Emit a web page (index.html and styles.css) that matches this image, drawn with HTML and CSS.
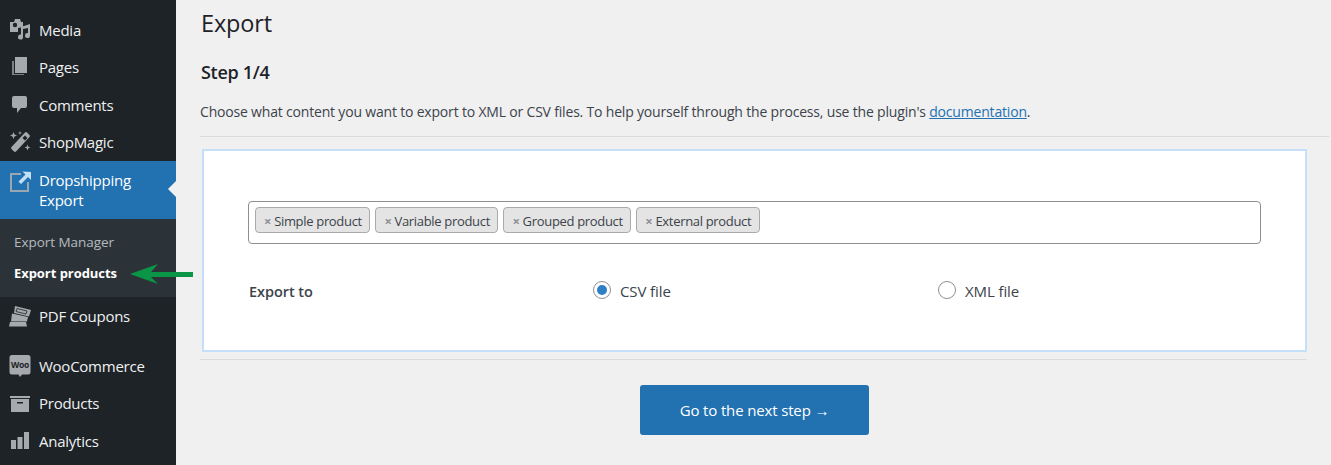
FILE: index.html
```html
<!DOCTYPE html>
<html lang="en">
<head>
<meta charset="utf-8">
<title>Export</title>
<link rel="stylesheet" href="styles.css">
</head>
<body>
<div class="app">
  <nav class="sidebar">
    <a class="item"><svg class="icon" viewBox="0 0 22 22"><path d="M1 3h4l1-3h5l1 3h2v5l-5 1v4H1z"/><circle cx="6" cy="6" r="2.200" fill="#1d2327"/><path d="M21 5v11.500a2.500 2.500 0 1 1-2-2.400V9l-5 1v8a2.500 2.500 0 1 1-2-2.400V8z"/></svg><span>Media</span></a>
    <a class="item"><svg class="icon" viewBox="0 0 22 22"><path d="M6 1h12v16H6z"/><path d="M3 5h2v13h10v1H3z" opacity=".7"/></svg><span>Pages</span></a>
    <a class="item"><svg class="icon" viewBox="0 0 22 22"><path d="M5 2h11a2 2 0 0 1 2 2v8a2 2 0 0 1-2 2h-4l-4 5v-5H5a2 2 0 0 1-2-2V4a2 2 0 0 1 2-2z"/></svg><span>Comments</span></a>
    <a class="item"><svg class="icon" viewBox="0 0 22 22"><path d="M16 1.500a1.500 1.500 0 0 1 2 0l2.500 2.500a1.500 1.500 0 0 1 0 2L7 20.500a1.500 1.500 0 0 1-2 0L2.500 18a1.500 1.500 0 0 1 0-2zM13.500 7l2.500 2.500 2.500-2.500L16 4.500z" fill-rule="evenodd"/><path d="M4.500 1l1 2.500 2.500 1-2.500 1-1 2.500-1-2.500-2.500-1 2.500-1zM18.500 13.500l.8 2.200 2.200.8-2.200.8-.8 2.200-.8-2.200-2.200-.8 2.200-.8zM11 0l.5 1.500L13 2l-1.500.5L11 4l-.5-1.500L9 2l1.500-.5z"/></svg><span>ShopMagic</span></a>
    <div class="group">
      <a class="item current"><svg class="icon ext" viewBox="0 0 22 22"><path d="M1 2h11v2H3v15h15v-8h2v10H1z" fill="#9aa7b0"/><path d="M22 1v8l-3-3-7 7-2.500-2.500 7-7-3-3z" fill="#bfe0f5"/></svg><span>Dropshipping<br>Export</span></a>
      <ul class="submenu">
        <li>Export Manager</li>
        <li class="on">Export products</li>
      </ul>
      <svg class="pointer" viewBox="0 0 64 22"><path d="M0 11 28 1 21 9H63v5H21l7 7z"/></svg>
    </div>
    <a class="item"><svg class="icon" viewBox="0 0 22 22"><path d="M6 1l16 4-2 6.500-15-3.500z"/><path d="M3 8.500l16 3.500-1 4.500H2z"/><path d="M1 17h16l1 4.500H0z"/><path d="M8 3.500l10 2.500-1 3-10-2.500z" fill="none" stroke="#1d2327" stroke-width=".8"/></svg><span>PDF Coupons</span></a>
    <div class="sep"></div>
    <a class="item"><svg class="icon" viewBox="0 0 22 22"><path d="M3 0h16a2.500 2.500 0 0 1 2.500 2.500v14.500a2.500 2.500 0 0 1-2.500 2.500h-6l-2 2.500-1.500-2.500H3a2.500 2.500 0 0 1-2.500-2.500V2.500A2.500 2.500 0 0 1 3 0z"/><text x="11" y="12.500" class="woo-text">Woo</text></svg><span>WooCommerce</span></a>
    <a class="item"><svg class="icon" viewBox="0 0 22 22"><path d="M1 4h20v2H1zM2 7h18v13H2z"/><path d="M8 10h6v1.500H8z" fill="#1d2327"/></svg><span>Products</span></a>
    <a class="item"><svg class="icon" viewBox="0 0 22 22"><path d="M2 10h5v9H2zM8.500 7h5v12h-5zM15 2h5v17h-5z"/></svg><span>Analytics</span></a>
  </nav>
  <main class="main">
    <h1 class="title">Export</h1>
    <h2 class="step">Step 1/4</h2>
    <p class="intro">Choose what content you want to export to XML or CSV files. To help yourself through the process, use the plugin's <a href="#">documentation</a>.</p>
    <div class="rule"></div>
    <div class="narrow">
      <section class="card">
        <div class="tags">
          <span class="tag"><i>×</i>Simple product</span>
          <span class="tag"><i>×</i>Variable product</span>
          <span class="tag"><i>×</i>Grouped product</span>
          <span class="tag"><i>×</i>External product</span>
        </div>
        <div class="row">
          <div class="label">Export to</div>
          <label class="radio checked"><b></b>CSV file</label>
          <label class="radio"><b></b>XML file</label>
        </div>
      </section>
      <div class="rule low"></div>
      <div class="actions"><button class="next">Go to the next step →</button></div>
    </div>
  </main>
</div>
</body>
</html>
```
FILE: styles.css
```css
* { box-sizing: border-box; }
html, body { margin: 0; height: 465px; overflow: hidden; }
body { background: #f0f0f1; font-family: "Open Sans", "Noto Sans", sans-serif; font-size: 14px; color: #3c434a; }
.app { display: flex; height: 465px; overflow: hidden; }
.sidebar { width: 176px; flex: none; background: #1d2327; color: #f0f0f1; padding-top: 11px; height: 465px; }
.item { display: flex; align-items: center; height: 37.5px; padding-left: 9px; gap: 8px; font-size: 15px; letter-spacing: -.25px; line-height: 20px; }
.icon { width: 22px; height: 22px; flex: none; fill: #a7aaad; }
.group { position: relative; }
.current { background: #2271b1; color: #fff; height: 58px; }
.current .ext { align-self: flex-start; margin-top: 10px; }
.submenu { list-style: none; margin: 0; padding: 8px 0 0; height: 78px; background: #2c3338; color: rgba(240,246,252,.7); font-size: 13.500px; letter-spacing: -.05px; }
.submenu li { height: 31px; line-height: 31px; padding-left: 14px; }
.submenu .on { color: #fff; font-weight: 700; font-size: 13px; }
.current::after { content: ""; position: absolute; right: 0; top: 20px; border: 8px solid transparent; border-right-color: #f0f0f1; border-left: 0; }
.pointer { position: absolute; left: 130px; top: 102px; width: 64px; height: 22px; fill: #0a9646; }
.sep { height: 12.500px; }
.woo-text { font: 700 8.500px "Open Sans", sans-serif; text-anchor: middle; fill: #1d2327; }
.main { flex: 1; padding: 0 2px 0 24px; min-width: 0; }
.title { margin: 5px 0 0; font-size: 23.500px; font-weight: 400; line-height: 36px; color: #1d2327; letter-spacing: -.15px; padding-left: 1px; }
.step { margin: 19px 0 0; font-size: 18px; font-weight: 600; line-height: 24px; color: #1d2327; letter-spacing: -.3px; padding-left: 1px; }
.intro { margin: 18px 0 0; line-height: 20px; letter-spacing: -.185px; }
.intro a { color: #2271b1; text-decoration: underline; }
.rule { height: 1px; background: #dcdcde; margin-top: 14px; }
.narrow { width: 1107px; }
.card { margin: 12px 0 0 2px; width: 1105px; height: 203px; background: #fff; border: 2px solid #c5dffa; padding: 50px 44px 0; }
.tags { display: flex; gap: 5px; align-items: flex-start; height: 43px; border: 1px solid #8c8f94; border-radius: 4px; padding: 5px 6px; }
.tag { display: flex; align-items: center; height: 26px; padding: 1px 7.500px 0 8px; background: #e4e4e4; border: 1px solid #aaa; border-radius: 4px; font-size: 13px; letter-spacing: -.32px; white-space: nowrap; }
.tag i { font-style: normal; color: #8c8f94; font-weight: 700; margin-right: 3px; }
.row { display: grid; grid-template-columns: 345px 345px 1fr; align-items: center; height: 40px; margin-top: 27px; }
.label { font-weight: 600; font-size: 14.500px; letter-spacing: -.05px; padding-left: 1px; }
.radio { display: flex; align-items: center; gap: 9px; font-size: 15px; letter-spacing: -.1px; }
.radio b { width: 18px; height: 18px; margin-top: -2px; border: 1px solid #8c8f94; border-radius: 50%; background: #fff; display: flex; align-items: center; justify-content: center; }
.radio.checked b::before { content: ""; width: 10px; height: 10px; border-radius: 50%; background: #2f7fc7; }
.low { margin-top: 7px; }
.actions { display: flex; justify-content: center; margin-top: 25px; padding-left: 2px; }
.next { width: 229px; height: 50px; background: #2271b1; color: #fff; border: 0; border-radius: 3px; font: 15px "Open Sans", sans-serif; letter-spacing: -.15px; }
```
